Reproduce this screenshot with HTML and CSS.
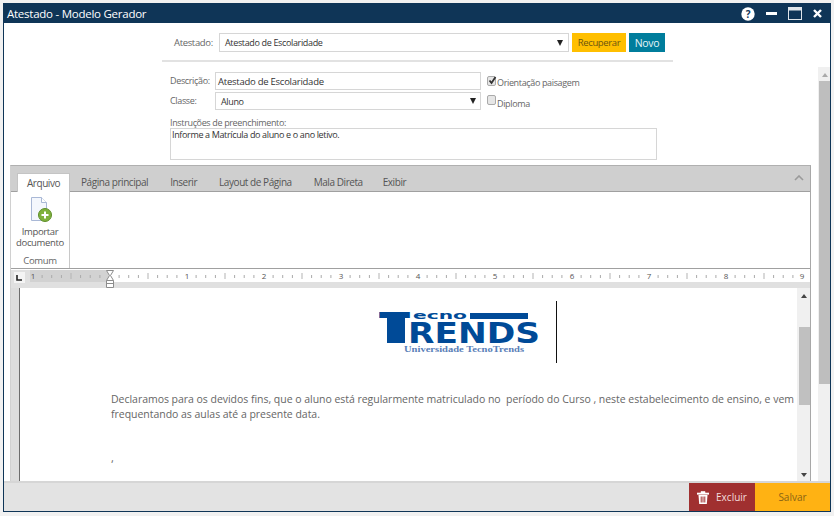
FILE: index.html
```html
<!DOCTYPE html>
<html lang="pt-BR">
<head>
<meta charset="utf-8">
<title>Atestado - Modelo Gerador</title>
<link rel="stylesheet" href="styles.css">
</head>
<body>
<div class="window">
  <header class="titlebar">
    <span class="title">Atestado - Modelo Gerador</span>
    <div class="win-icons">
      <svg class="ic-help" width="14" height="14" viewBox="0 0 14 14"><circle cx="7" cy="7" r="6.7" fill="#fff"/><text x="7" y="11" text-anchor="middle" class="help-q">?</text></svg>
      <svg class="ic-min" width="11" height="3" viewBox="0 0 11 3"><rect width="11" height="3" fill="#fff"/></svg>
      <svg class="ic-max" width="14" height="13" viewBox="0 0 14 13"><rect x=".5" y=".5" width="13" height="12" fill="none" stroke="#dfe5ea"/><rect x="1" y="1" width="12" height="2.5" fill="#dfe5ea"/></svg>
      <svg class="ic-close" width="9" height="9" viewBox="0 0 9 9"><path d="M1 1l7 7M8 1L1 8" stroke="#fff" stroke-width="2.4"/></svg>
    </div>
  </header>

  <section class="top">
    <div class="top-row">
      <span class="lbl top-lbl">Atestado:</span>
      <div class="field top-select"><span>Atestado de Escolaridade</span><i class="caret"></i></div>
      <button class="btn btn-yellow">Recuperar</button>
      <button class="btn btn-teal">Novo</button>
    </div>
    <div class="top-rule"></div>
  </section>

  <div class="main">
    <div class="content">
      <div class="form">
        <div class="form-row">
          <span class="lbl form-lbl">Descrição:</span>
          <div class="field form-field desc"><span>Atestado de Escolaridade</span></div>
          <label class="check"><span class="box"><svg width="9" height="9" viewBox="0 0 9 9"><path d="M1.5 4.500l2 2.500 4-6" fill="none" stroke="#333" stroke-width="1.800"/></svg></span><span class="check-text">Orientação paisagem</span></label>
        </div>
        <div class="form-row">
          <span class="lbl form-lbl">Classe:</span>
          <div class="field form-field cls"><span>Aluno</span><i class="caret"></i></div>
          <label class="check check-low"><span class="box"></span><span class="check-text">Diploma</span></label>
        </div>
        <div class="lbl instr-lbl">Instruções de preenchimento:</div>
        <div class="field instr">Informe a Matrícula do aluno e o ano letivo.</div>
      </div>

      <div class="ribbon">
        <div class="tabs">
          <span class="tab active">Arquivo</span>
          <span class="tab t1">Página principal</span>
          <span class="tab t2">Inserir</span>
          <span class="tab t3">Layout de Página</span>
          <span class="tab t4">Mala Direta</span>
          <span class="tab t5">Exibir</span>
          <svg class="collapse" width="10" height="6" viewBox="0 0 10 6"><path d="M1 5l4-4 4 4" fill="none" stroke="#9a9a9a" stroke-width="1.600"/></svg>
        </div>
        <div class="ribbon-body">
          <div class="group">
            <svg class="ic-file" width="24" height="25" viewBox="0 0 24 25">
              <path d="M2.500.5h10l5 5v18h-15z" fill="#f4f7fd" stroke="#a9b8d6"/>
              <path d="M12.500.5v5h5" fill="#fff" stroke="#a9b8d6"/>
              <circle cx="16" cy="18" r="6.500" fill="#7fb13c" stroke="#5e8e2a"/>
              <path d="M16 14.500v7M12.500 18h7" stroke="#fff" stroke-width="2"/>
            </svg>
            <div class="group-text">Importar<br>documento</div>
            <div class="group-name">Comum</div>
          </div>
        </div>
        <div class="ruler">
          <span class="ruler-corner"><svg width="7" height="6" viewBox="0 0 7 6"><path d="M1 0v5h5" fill="none" stroke="#222" stroke-width="1.600"/></svg></span>
          <svg class="ruler-svg" width="780" height="18" viewBox="0 0 780 18">
            <defs>
              <pattern id="ticks" x="2" y="0" width="77" height="12" patternUnits="userSpaceOnUse">
                <rect x="9.600" y="5" width="1" height="3" fill="#aaa"/>
                <rect x="19.200" y="5" width="1" height="3" fill="#aaa"/>
                <rect x="28.900" y="5" width="1" height="3" fill="#aaa"/>
                <rect x="38.500" y="3" width="1" height="6" fill="#b4b4b4"/>
                <rect x="48.100" y="5" width="1" height="3" fill="#aaa"/>
                <rect x="57.700" y="5" width="1" height="3" fill="#aaa"/>
                <rect x="67.400" y="5" width="1" height="3" fill="#aaa"/>
              </pattern>
            </defs>
            <rect x="0" y="0" width="81" height="12" fill="#d2d2d2"/>
            <rect x="81" y="0" width="699" height="12" fill="#fff"/>
            <rect x="0" y="12" width="780" height="6" fill="#e0e0e0"/>
            <rect x="3" y="0" width="777" height="12" fill="url(#ticks)"/>
            <g class="ruler-num">
              <text x="3" y="9" text-anchor="middle">1</text>
              <text x="157" y="9" text-anchor="middle">1</text>
              <text x="234" y="9" text-anchor="middle">2</text>
              <text x="311" y="9" text-anchor="middle">3</text>
              <text x="388" y="9" text-anchor="middle">4</text>
              <text x="465" y="9" text-anchor="middle">5</text>
              <text x="542" y="9" text-anchor="middle">6</text>
              <text x="619" y="9" text-anchor="middle">7</text>
              <text x="696" y="9" text-anchor="middle">8</text>
              <text x="772" y="9" text-anchor="middle">9</text>
            </g>
            <path d="M76.500 .5h7l-3 5 3 5h-7l3-5z" fill="#fff" stroke="#8c8c8c"/>
            <path d="M76.500 10.500h7v7h-7z" fill="#fff" stroke="#8c8c8c"/>
            <path d="M76.500 13.500h7" stroke="#8c8c8c"/>
          </svg>
        </div>
        <div class="doc">
          <div class="doc-strip"></div>
          <div class="page">
            <div class="logo-row">
              <svg class="logo" width="162" height="60" viewBox="0 -10 162 60">
                <text x="0" y="31" class="logo-t" textLength="31" lengthAdjust="spacingAndGlyphs">T</text>
                <rect x="8" y="5" width="18" height="26" fill="#004a97"/>
                <text x="34" y="7" class="logo-ecno" textLength="54" lengthAdjust="spacingAndGlyphs">ecno</text>
                <rect x="91" y="1" width="58" height="6" fill="#004a97"/>
                <text x="29" y="31" class="logo-rends" textLength="132" lengthAdjust="spacingAndGlyphs">RENDS</text>
                <text x="25" y="40" class="logo-sub" textLength="120" lengthAdjust="spacingAndGlyphs">Universidade TecnoTrends</text>
              </svg>
              <span class="cursor"></span>
            </div>
            <p class="doc-text">Declaramos para os devidos fins, que o aluno está regularmente matriculado no&nbsp; período do Curso , neste estabelecimento de ensino, e vem frequentando as aulas até a presente data.</p>
            <p class="doc-comma">,</p>
          </div>
          <div class="doc-scroll">
            <i class="arrow-up dark"></i>
            <i class="doc-thumb"></i>
            <i class="arrow-down dark"></i>
          </div>
        </div>
      </div>
    </div>
    <div class="main-scroll">
      <i class="arrow-up"></i>
      <i class="main-thumb"></i>
    </div>
  </div>

  <footer class="footer">
    <button class="fbtn excluir">
      <svg width="12" height="13" viewBox="0 0 12 13"><path d="M0 2h12v1.300H0zM4 2V.5h4V2" fill="#fff" stroke="#fff" stroke-width=".6"/><path d="M1.500 4h9l-.7 9H2.200z" fill="#fff"/><path d="M4.200 5.500v6M6 5.500v6M7.800 5.500v6" stroke="#a03030"/></svg>
      <span>Excluir</span>
    </button>
    <button class="fbtn salvar">Salvar</button>
  </footer>
</div>
</body>
</html>
```
FILE: styles.css
```css
* { box-sizing: border-box; }
html, body { margin: 0; height: 516px; overflow: hidden; }
body { padding: 3px 3px 4px; background: #f1f1f1; font-family: "Open Sans", "Noto Sans", sans-serif; font-size: 9px; letter-spacing: -.35px; color: #444; }
button { font-family: inherit; border: 0; padding: 0; letter-spacing: inherit; }

.window { width: 828px; height: 509px; border: 1px solid #0f3557; background: #fff; display: flex; flex-direction: column; overflow: hidden; }

.titlebar { flex: none; height: 19px; background: #0f3557; color: #fff; display: flex; align-items: center; justify-content: space-between; padding: 0 8px 0 3px; }
.title { font-size: 11.5px; letter-spacing: -.25px; }
.win-icons { display: flex; align-items: center; }
.win-icons svg { display: block; }
.help-q { font: bold 10px "Open Sans", sans-serif; fill: #0f3557; }
.ic-min { margin-left: 11px; }
.ic-max { margin-left: 11px; }
.ic-close { margin-left: 11px; }

.lbl { color: #666; }
.field { border: 1px solid #d6d6d6; background: #fff; color: #333; display: flex; align-items: center; }
.caret { width: 0; height: 0; border-left: 3px solid transparent; border-right: 3px solid transparent; border-top: 6px solid #222; margin-left: auto; }

.top { flex: none; height: 44px; padding-top: 10px; }
.top-row { display: flex; align-items: stretch; height: 19px; padding-left: 170px; }
.top-lbl { width: 45px; line-height: 19px; font-size: 9.5px; }
.top-select { width: 350px; padding: 0 5px; }
.btn { font-size: 9.5px; margin-left: 3px; height: 19px; }
.btn-yellow { width: 54px; background: #ffbf00; color: #6b5510; }
.btn-teal { width: 36px; background: #007d9c; color: #e7f4f7; font-size: 10.5px; }
.top-rule { width: 511px; height: 2px; margin: 8px 0 0 158px; background: #e2e2e2; }

.main { flex: 1; min-height: 0; display: flex; }
.content { width: 813px; flex: none; display: flex; flex-direction: column; min-height: 0; }

.form { flex: none; height: 98px; padding: 5px 0 0 166px; }
.form-row { display: flex; align-items: stretch; height: 18px; margin-bottom: 2px; }
.form-lbl { width: 45px; line-height: 18px; }
.form-field { width: 266px; }
.desc { padding-left: 2px; font-size: 9.5px; letter-spacing: -.25px; }
.cls { padding: 0 4px 0 5px; }
.check { display: flex; align-items: flex-start; margin-left: 6px; color: #666; line-height: 18px; }
.check-text { padding-top: 2px; }
.check-low .check-text { padding-top: 3px; }
.box { width: 9px; height: 10px; margin-top: 4px; border: 1px solid #aaa; border-radius: 2px; background: #e6e6e6; display: block; margin-right: 1px; flex: none; }
.check-low .box { margin-top: 3px; }
.box svg { display: block; margin: -1px 0 0 0; }
.instr-lbl { line-height: 10px; margin-top: 8px; }
.instr { width: 487px; height: 32px; align-items: flex-start; padding-left: 1px; line-height: 11px; }

.ribbon { margin-left: 6px; width: 801px; flex: 1; min-height: 0; display: flex; flex-direction: column; border-top: 1px solid #b0b0b0; border-right: 1px solid #a8a8a8; border-left: 1px solid #d0d0d0; overflow: hidden; }
.tabs { flex: none; height: 26px; background: #cfcfcf; border-bottom: 1px solid #a0a0a0; display: flex; align-items: flex-end; font-size: 10px; letter-spacing: -.44px; color: #555; padding-left: 6px; position: relative; }
.tab { line-height: 18px; height: 18px; }
.tab.active { width: 53px; height: 19px; margin-bottom: -1px; text-align: center; background: #fff; border: 1px solid #c4c4c4; border-bottom: 0; }
.t1 { margin-left: 11px; }
.t2, .t3, .t4 { margin-left: 22px; }
.t5 { margin-left: 20px; }
.collapse { position: absolute; right: 6px; top: 9px; }

.ribbon-body { flex: none; height: 77px; background: #fff; border-bottom: 1px solid #a0a0a0; }
.group { width: 59px; height: 76px; border-right: 1px solid #c8c8c8; display: flex; flex-direction: column; align-items: center; color: #555; font-size: 9.5px; letter-spacing: -.35px; text-align: center; }
.ic-file { display: block; margin: 5px 0 0 1px; flex: none; }
.group-text { line-height: 11px; margin-top: 4px; }
.group-name { margin-top: 7px; color: #666; line-height: 12px; }

.ruler { flex: none; height: 19px; display: flex; background: #e0e0e0; border-top: 1px solid #fff; position: relative; }
.ruler-corner { position: absolute; left: 3px; top: 2px; width: 11px; height: 11px; background: #f4f4f4; display: flex; align-items: center; justify-content: center; }
.ruler-svg { display: block; margin-left: 19px; flex: none; }
.ruler-num text { font: 8px "Open Sans", sans-serif; fill: #555; letter-spacing: 0; }

.doc { flex: 1; min-height: 0; display: flex; overflow: hidden; }
.doc-strip { width: 8px; flex: none; background: #dcdcdc; }
.page { width: 778px; flex: none; background: #fff; border-left: 1px solid #6c6c6c; overflow: hidden; color: #666; letter-spacing: 0; }
.logo-row { height: 76px; display: flex; padding: 14px 0 0 359px; align-items: flex-start; }
.logo { display: block; flex: none; }
.logo-t, .logo-rends { font-family: "DejaVu Sans", sans-serif; font-weight: bold; fill: #004a97; font-size: 29px; letter-spacing: 0; }
.logo-t { font-size: 42px; }
.logo-ecno { font: bold 11px "DejaVu Sans", sans-serif; fill: #004a97; letter-spacing: 0; }
.logo-sub { font: bold 8px "Liberation Serif", serif; fill: #5a80b8; letter-spacing: 0; }
.cursor { width: 1px; height: 62px; margin: -1px 0 0 15px; background: #111; flex: none; }
.doc-text { margin: 28px 0 0 91px; font-size: 10.5px; letter-spacing: -.03px; line-height: 15px; width: 690px; }
.doc-comma { margin: 28px 0 0 91px; font-size: 11px; line-height: 15px; }

.doc-scroll { width: 14px; flex: none; background: #f0f0f0; display: flex; flex-direction: column; align-items: center; padding-top: 6px; }
.doc-thumb { width: 11px; height: 78px; background: #c0c0c0; margin-top: 29px; flex: none; }
.arrow-up, .arrow-down { width: 0; height: 0; flex: none; border-left: 3px solid transparent; border-right: 3px solid transparent; }
.arrow-up { border-bottom: 4px solid #aaa; }
.arrow-up.dark { border-bottom-color: #444; }
.arrow-down { border-top: 4px solid #444; margin-top: 68px; }

.main-scroll { width: 13px; flex: none; background: #f0f0f0; display: flex; flex-direction: column; align-items: center; padding-top: 6px; margin-left: 1px; }
.main-thumb { width: 11px; height: 303px; background: #bebebe; margin-top: 4px; flex: none; }

.footer { flex: none; height: 30px; background: #e3e3e3; border-top: 2px solid #d6d6d6; display: flex; justify-content: flex-end; }
.fbtn { height: 28px; font-size: 10px; letter-spacing: 0; }
.excluir { width: 66px; background: #a03030; color: #f3dede; display: flex; align-items: center; justify-content: center; gap: 7px; }
.salvar { width: 75px; background: #ffb213; color: #8a6414; }
```
